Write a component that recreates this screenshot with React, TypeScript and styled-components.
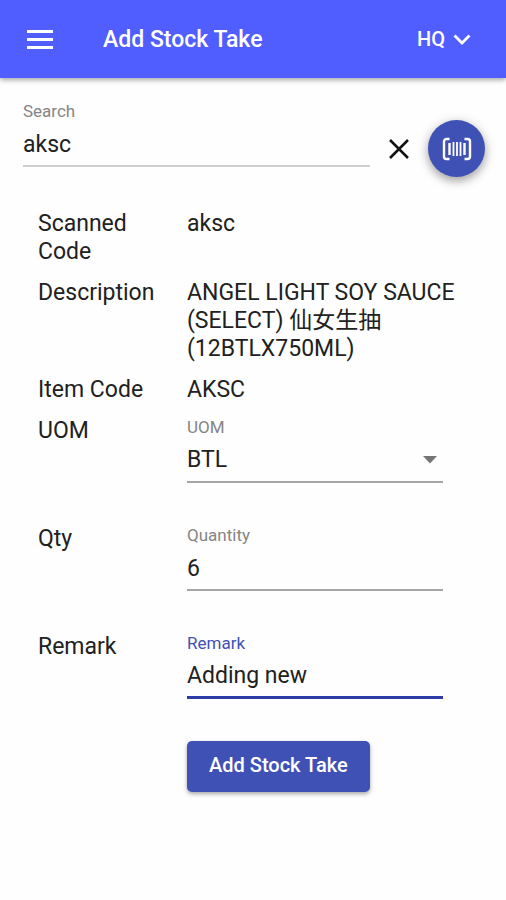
import React, { useId, useState } from "react";
import styled, { createGlobalStyle } from "styled-components";

const primary = "#3f51b5";

const GlobalStyle = createGlobalStyle`
  *, *::before, *::after { box-sizing: border-box; }
  body {
    margin: 0;
    background: #fefefe;
    color: #212121;
    font-family: Roboto, "Noto Sans CJK SC", sans-serif;
    font-size: 23px;
    line-height: 28px;
  }
  button, input, select { font: inherit; color: inherit; }
`;

const AppBar = styled.header`
  display: flex;
  align-items: center;
  height: 78px;
  padding: 0 33px 0 22px;
  background: #505eff;
  color: #fff;
  box-shadow: 0 2px 5px rgba(0, 0, 0, 0.35);
`;

const BareButton = styled.button`
  display: inline-flex;
  align-items: center;
  justify-content: center;
  flex: none;
  padding: 0;
  border: 0;
  background: none;
  cursor: pointer;
`;

const Title = styled.h1`
  flex: 1;
  margin: 0 0 0 45px;
  padding-top: 2px;
  font-size: 23px;
  line-height: 28px;
  font-weight: 500;
`;

const BranchButton = styled(BareButton)`
  gap: 6px;
  font-size: 20px;
  font-weight: 500;
`;

const SearchForm = styled.form`
  display: flex;
  align-items: flex-start;
  padding: 23px 21px 0 23px;
`;

const SearchActions = styled.div`
  display: flex;
  align-items: center;
  gap: 11px;
  margin: 19px 0 0 11px;
`;

const ClearButton = styled(BareButton)`
  width: 36px;
  height: 36px;
`;

const ScanButton = styled(BareButton)`
  width: 57px;
  height: 57px;
  border-radius: 50%;
  background: ${primary};
  color: #fff;
  box-shadow: 0 4px 8px rgba(0, 0, 0, 0.28), 0 2px 14px rgba(0, 0, 0, 0.14);
`;

const Field = styled.div`
  flex: 1;
  min-width: 0;
`;

const FieldLabel = styled.label<{ $active?: boolean }>`
  display: block;
  margin-bottom: 3px;
  font-size: 17px;
  line-height: 20px;
  color: ${(p) => (p.$active ? primary : "#858585")};
`;

const Control = styled.input<{ $line?: string; $active?: boolean }>`
  display: block;
  width: 100%;
  height: 43px;
  padding: 0 0 ${(p) => (p.$active ? "2px" : "1px")};
  border: 0;
  border-bottom: ${(p) => (p.$active ? "3px" : "2px")} solid ${(p) => p.$line ?? "#a6a6a6"};
  border-radius: 0;
  background: transparent;
  outline: none;
  appearance: none;
`;

const SelectWrap = styled.div`
  position: relative;
`;

const SelectArrow = styled.svg`
  position: absolute;
  right: 6px;
  top: 16px;
  pointer-events: none;
`;

const Details = styled.form`
  display: grid;
  gap: 13px;
  padding: 33px 38px 48px;
`;

const Row = styled.div<{ $tall?: boolean }>`
  display: grid;
  grid-template-columns: 120px minmax(0, 1fr);
  column-gap: 29px;
  align-items: start;
  min-height: ${(p) => (p.$tall ? "95px" : "28px")};
`;

const FieldCell = styled.div`
  margin-right: 25px;
`;

const SubmitButton = styled.button`
  grid-column: 2;
  justify-self: start;
  height: 51px;
  padding: 0 22px 3px;
  border: 0;
  border-radius: 5px;
  background: ${primary};
  color: #fff;
  font-size: 20px;
  font-weight: 500;
  box-shadow: 0 2px 4px rgba(0, 0, 0, 0.35);
  cursor: pointer;
`;

const MenuIcon = () => (
  <svg width="36" height="36" viewBox="0 0 36 36" fill="currentColor" aria-hidden="true">
    <path d="M5 9h26v3H5zM5 17h26v3H5zM5 25h26v3H5z" />
  </svg>
);

const ChevronIcon = () => (
  <svg width="22" height="22" viewBox="0 0 22 22" fill="none" stroke="currentColor" strokeWidth="2.8" aria-hidden="true">
    <path d="M3.5 7.5 11 15l7.5-7.5" />
  </svg>
);

const CloseIcon = () => (
  <svg width="22" height="22" viewBox="0 0 22 22" fill="none" stroke="#111" strokeWidth="2.5" aria-hidden="true">
    <path d="M2 2l18 18M20 2 2 20" />
  </svg>
);

const BarcodeIcon = () => (
  <svg width="30" height="24" viewBox="0 0 30 24" fill="none" stroke="currentColor" aria-hidden="true">
    <path
      d="M7.5 2H4.500a2.500 2.500 0 0 0-2.500 2.500v15a2.500 2.500 0 0 0 2.500 2.500h3M22.500 2h3a2.500 2.500 0 0 1 2.500 2.500v15a2.500 2.500 0 0 1-2.500 2.500h-3"
      strokeWidth="2.4"
    />
    <path d="M7.500 6v12M22.500 6v12" strokeWidth="2.4" />
    <path d="M11.500 5v14M15 5v14M18.500 5v14" strokeWidth="1.8" />
  </svg>
);

type TextFieldProps = {
  label: string;
  initial: string;
  line?: string;
  active?: boolean;
  numeric?: boolean;
};

function TextField({ label, initial, line, active, numeric }: TextFieldProps) {
  const id = useId();
  const [value, setValue] = useState(initial);
  return (
    <Field>
      <FieldLabel htmlFor={id} $active={active}>{label}</FieldLabel>
      <Control
        id={id}
        $line={line}
        $active={active}
        inputMode={numeric ? "numeric" : "text"}
        value={value}
        onChange={(e) => setValue(e.target.value)}
      />
    </Field>
  );
}

function UnitField() {
  const id = useId();
  return (
    <Field>
      <FieldLabel htmlFor={id}>UOM</FieldLabel>
      <SelectWrap>
        <Control as="select" id={id} defaultValue="BTL">
          <option>BTL</option>
        </Control>
        <SelectArrow width="14" height="8" viewBox="0 0 14 8" aria-hidden="true">
          <path d="M0 0h14L7 7.500z" fill="#757575" />
        </SelectArrow>
      </SelectWrap>
    </Field>
  );
}

export default function App() {
  return (
    <>
      <GlobalStyle />
      <AppBar>
        <BareButton type="button" aria-label="Menu"><MenuIcon /></BareButton>
        <Title>Add Stock Take</Title>
        <BranchButton type="button">HQ<ChevronIcon /></BranchButton>
      </AppBar>
      <main>
        <SearchForm onSubmit={(e) => e.preventDefault()}>
          <TextField label="Search" initial="aksc" line="#cfcfcf" />
          <SearchActions>
            <ClearButton type="button" aria-label="Clear"><CloseIcon /></ClearButton>
            <ScanButton type="button" aria-label="Scan barcode"><BarcodeIcon /></ScanButton>
          </SearchActions>
        </SearchForm>
        <Details onSubmit={(e) => e.preventDefault()}>
          <Row><span>Scanned Code</span><span>aksc</span></Row>
          <Row>
            <span>Description</span>
            <span>ANGEL LIGHT SOY SAUCE (SELECT) 仙女生抽 (12BTLX750ML)</span>
          </Row>
          <Row><span>Item Code</span><span>AKSC</span></Row>
          <Row $tall><span>UOM</span><FieldCell><UnitField /></FieldCell></Row>
          <Row $tall>
            <span>Qty</span>
            <FieldCell><TextField label="Quantity" initial="6" numeric /></FieldCell>
          </Row>
          <Row $tall>
            <span>Remark</span>
            <FieldCell><TextField label="Remark" initial="Adding new" line="#2c3ba6" active /></FieldCell>
          </Row>
          <Row><SubmitButton type="submit">Add Stock Take</SubmitButton></Row>
        </Details>
      </main>
    </>
  );
}
